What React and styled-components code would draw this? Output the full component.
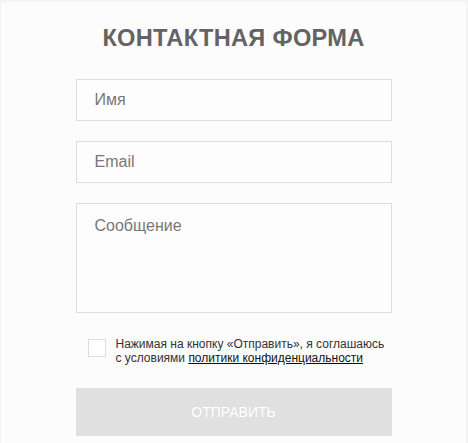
import React from "react";
import styled, { createGlobalStyle } from "styled-components";

const Global = createGlobalStyle`
  html, body { margin: 0; padding: 0; background: #f3f3f3; }
  body { font-family: "Liberation Sans", Arial, sans-serif; }
  * { box-sizing: border-box; }
`;

const Frame = styled.div`
  width: 468px;
  height: 443px;
  padding: 2px 2px 0 1px;
  background: #f3f3f3;
  overflow: hidden;
`;

const Panel = styled.div`
  height: 100%;
  background: #fcfcfc;
  display: flex;
  flex-direction: column;
  align-items: center;
`;

const Title = styled.h2`
  margin: 22px 0 0;
  font-size: 23.6px;
  line-height: 28px;
  font-weight: 700;
  color: #636363;
  letter-spacing: 0.3px;
`;

const Form = styled.form`
  width: 316px;
  margin-top: 27px;
  display: flex;
  flex-direction: column;
  gap: 20px;
`;

const Field = styled.input`
  width: 100%;
  height: 42px;
  border: 1px solid #dedede;
  background: #fdfdfd;
  padding: 0 18px;
  font-family: "Liberation Sans", Arial, sans-serif;
  font-size: 16px;
  color: #333;
  outline: none;
  &::placeholder { color: #777; }
`;

const Area = styled.textarea`
  width: 100%;
  height: 110px;
  border: 1px solid #dedede;
  background: #fdfdfd;
  padding: 12px 18px;
  font-family: "Liberation Sans", Arial, sans-serif;
  font-size: 16px;
  line-height: 20px;
  color: #333;
  resize: none;
  outline: none;
  display: block;
  &::placeholder { color: #777; }
`;

const Agree = styled.label`
  display: flex;
  align-items: flex-start;
  gap: 10px;
  padding: 5px 0 0 12px;
  font-size: 12px;
  line-height: 13.5px;
  color: #333;
`;

const Box = styled.span`
  flex: none;
  width: 18px;
  height: 18px;
  border: 1px solid #dedede;
  background: #fff;
  margin-top: 1px;
`;

const Link = styled.a`
  color: #111;
  text-decoration: underline;
`;

const Submit = styled.button`
  margin-top: 3px;
  width: 100%;
  height: 48px;
  border: none;
  background: #e0e0e0;
  color: #fff;
  font-family: "Liberation Sans", Arial, sans-serif;
  font-size: 14px;
  text-transform: uppercase;
`;

export default function App() {
  return (
    <Frame>
      <Global />
      <Panel>
        <Title>КОНТАКТНАЯ ФОРМА</Title>
        <Form onSubmit={(e) => e.preventDefault()}>
          <Field placeholder="Имя" />
          <Field placeholder="Email" />
          <Area placeholder="Сообщение" />
          <Agree>
            <Box />
            <span>
              Нажимая на кнопку «Отправить», я соглашаюсь
              <br />с условиями <Link href="#">политики конфиденциальности</Link>
            </span>
          </Agree>
          <Submit type="submit">Отправить</Submit>
        </Form>
      </Panel>
    </Frame>
  );
}
